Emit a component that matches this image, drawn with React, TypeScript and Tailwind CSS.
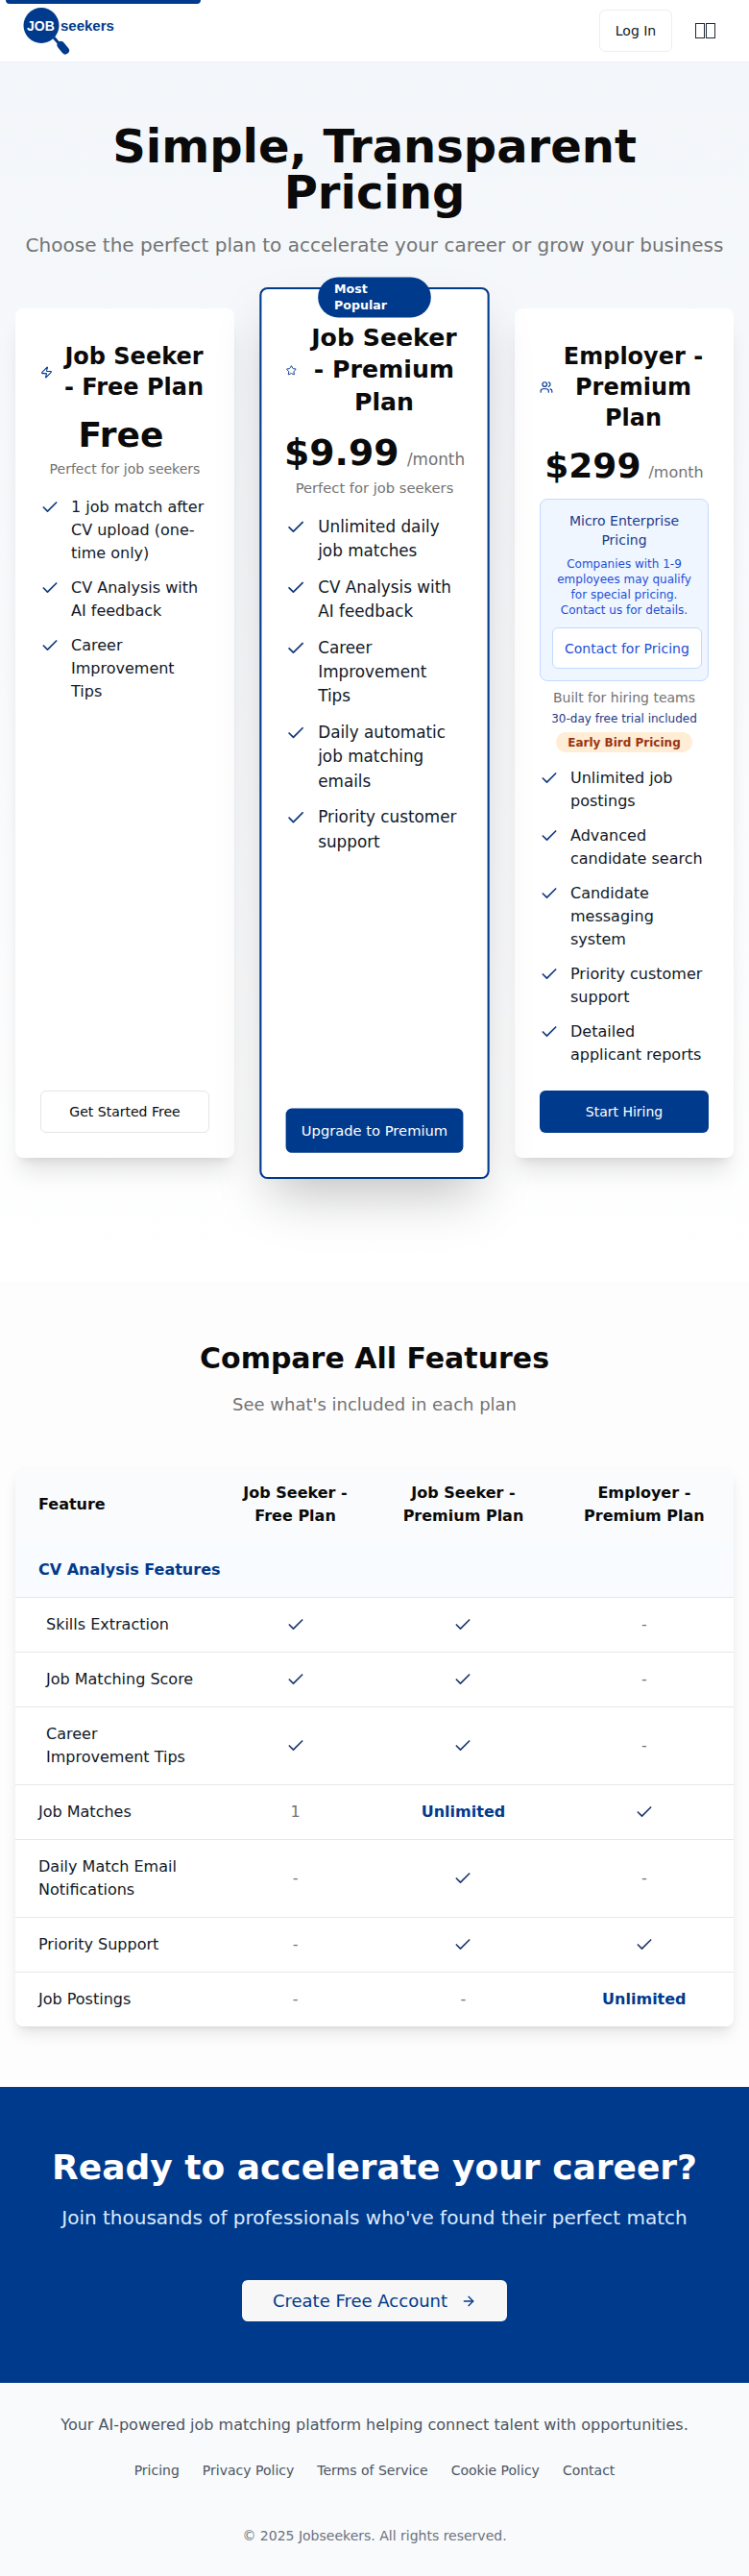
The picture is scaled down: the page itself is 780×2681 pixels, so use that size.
import { ArrowRight, Check, Star, Users, Zap } from "lucide-react";
import type { ReactNode } from "react";

function Logo() {
  return (
    <svg width="100" height="50" viewBox="0 0 100 50" className="block">
      <circle cx="19" cy="18.500" r="18.500" fill="#003a8c" />
      <path d="M32 31 L38 38" stroke="#003a8c" strokeWidth="3" />
      <path d="M39.500 39 L44 44.500" stroke="#003a8c" strokeWidth="8" strokeLinecap="round" />
      <text x="4" y="24" fill="#ffffff" fontSize="14" fontWeight="700" fontFamily="Liberation Sans, sans-serif">
        JOB
      </text>
      <text x="39" y="24" fill="#003a8c" fontSize="15" fontWeight="700" fontFamily="Liberation Sans, sans-serif">
        seekers
      </text>
    </svg>
  );
}

function Header() {
  return (
    <header className="relative flex h-[65px] items-center justify-between border-b border-[#eef1f5] bg-white pl-6 pr-[35px]">
      <div className="absolute left-[6px] top-0 h-1 w-[203px] rounded-b-sm bg-[#003a8c]" />
      <div className="self-start pt-2">
        <Logo />
      </div>
      <div className="flex items-center">
        <button className="h-[44px] w-[76px] rounded-md border border-[#eceef1] bg-white text-sm text-[#111827]">
          Log In
        </button>
        <div className="ml-[24px] flex gap-[1px]">
          <span className="h-[16px] w-[10px] border border-[#1f2937]" />
          <span className="h-[16px] w-[10px] border border-[#1f2937]" />
        </div>
      </div>
    </header>
  );
}

function Feature({ children }: { children: ReactNode }) {
  return (
    <li className="flex items-start">
      <Check className="mr-3 mt-0.5 h-5 w-5 shrink-0 text-[#12397c]" />
      <span className="text-base leading-6 text-[#111827]">{children}</span>
    </li>
  );
}

function PlanTitle({ icon, children }: { icon: ReactNode; children: ReactNode }) {
  return (
    <div className="mb-[14px] flex items-center">
      <span className="mr-1 w-[15px] shrink-0 text-[#003a8c]">{icon}</span>
      <h3 className="flex-1 text-center text-2xl font-bold leading-8 text-[#0a0a0a]">{children}</h3>
    </div>
  );
}

function Price({ amount, suffix }: { amount: string; suffix?: string }) {
  return (
    <div className="flex items-baseline justify-center">
      <span className="text-4xl font-bold text-[#0a0a0a]">{amount}</span>
      <span className="ml-2 text-base text-[#737373]">{suffix}</span>
    </div>
  );
}

function Pricing() {
  return (
    <section className="bg-gradient-to-b from-[#f3f6fa] to-white px-4 pb-[128px] pt-[63px]">
      <h1 className="text-center text-5xl font-bold leading-[48px] text-[#0a0a0a]">Simple, Transparent Pricing</h1>
      <p className="mb-[52px] mt-[17px] whitespace-nowrap text-center text-xl text-[#737373]">
        Choose the perfect plan to accelerate your career or grow your business
      </p>
      <div className="grid grid-cols-3 gap-8">
        <div className="flex flex-col rounded-lg border-2 border-white bg-white px-6 pb-6 pt-[32px] shadow-xl">
          <PlanTitle icon={<Zap size={13} />}>Job Seeker - Free Plan</PlanTitle>
          <Price amount="Free" />
          <p className="mb-[18px] mt-[5px] text-center text-sm text-[#737373]">Perfect for job seekers</p>
          <ul className="mb-[25px] flex flex-col gap-3">
            <Feature>1 job match after CV upload (one-time only)</Feature>
            <Feature>CV Analysis with AI feedback</Feature>
            <Feature>Career Improvement Tips</Feature>
          </ul>
          <button className="mt-auto h-11 rounded-md border border-[#e5e5e5] bg-white text-sm font-medium text-[#0a0a0a]">
            Get Started Free
          </button>
        </div>

        <div className="relative flex scale-105 flex-col rounded-lg border-2 border-[#003a8c] bg-white px-6 pb-6 pt-[32px] shadow-2xl">
          <div className="absolute -top-3 left-1/2 -translate-x-1/2 rounded-full bg-[#003a8c] px-4 py-1 text-xs font-bold leading-4 text-white">
            Most Popular
          </div>
          <PlanTitle icon={<Star size={11} />}>Job Seeker - Premium Plan</PlanTitle>
          <Price amount="$9.99" suffix="/month" />
          <p className="mb-[17px] mt-[5px] text-center text-sm text-[#737373]">Perfect for job seekers</p>
          <ul className="mb-[25px] flex flex-col gap-3">
            <Feature>Unlimited daily job matches</Feature>
            <Feature>CV Analysis with AI feedback</Feature>
            <Feature>Career Improvement Tips</Feature>
            <Feature>Daily automatic job matching emails</Feature>
            <Feature>Priority customer support</Feature>
          </ul>
          <button className="mt-auto h-11 rounded-md bg-[#003a8c] text-sm font-medium text-white">
            Upgrade to Premium
          </button>
        </div>

        <div className="flex flex-col rounded-lg border-2 border-white bg-white px-6 pb-6 pt-[32px] shadow-xl">
          <PlanTitle icon={<Users size={14} />}>Employer - Premium Plan</PlanTitle>
          <Price amount="$299" suffix="/month" />
          <div className="mb-[7px] mt-[14px] rounded-lg border border-[#bfdbfe] bg-[#eff6ff] p-3 text-center">
            <p className="mb-[7px] text-sm text-[#1e3a8a]">Micro Enterprise Pricing</p>
            <p className="mb-[10px] text-xs text-[#1d4ed8]">
              Companies with 1-9 employees may qualify for special pricing. Contact us for details.
            </p>
            <button className="block h-[43px] whitespace-nowrap rounded-md border border-[#bfdbfe] bg-white px-3 text-sm text-[#1d4ed8]">
              Contact for Pricing
            </button>
          </div>
          <p className="text-center text-sm text-[#737373]">Built for hiring teams</p>
          <p className="mt-1 text-center text-xs text-[#1e3a8a]">30-day free trial included</p>
          <div className="mb-[15px] mt-[6px] flex justify-center">
            <span className="rounded-full bg-[#ffedd5] px-3 py-[2.5px] text-xs font-bold text-[#9a3412]">
              Early Bird Pricing
            </span>
          </div>
          <ul className="mb-[25px] flex flex-col gap-3">
            <Feature>Unlimited job postings</Feature>
            <Feature>Advanced candidate search</Feature>
            <Feature>Candidate messaging system</Feature>
            <Feature>Priority customer support</Feature>
            <Feature>Detailed applicant reports</Feature>
          </ul>
          <button className="mt-auto h-11 rounded-md bg-[#003a8c] text-sm font-medium text-white">Start Hiring</button>
        </div>
      </div>
    </section>
  );
}

type Cell = "check" | "-" | string;

const ROWS: { name: string; cells: Cell[]; indent?: boolean }[] = [
  { name: "Skills Extraction", cells: ["check", "check", "-"], indent: true },
  { name: "Job Matching Score", cells: ["check", "check", "-"], indent: true },
  { name: "Career Improvement Tips", cells: ["check", "check", "-"], indent: true },
  { name: "Job Matches", cells: ["1", "Unlimited", "check"] },
  { name: "Daily Match Email Notifications", cells: ["-", "check", "-"] },
  { name: "Priority Support", cells: ["-", "check", "check"] },
  { name: "Job Postings", cells: ["-", "-", "Unlimited"] },
];

function TableCell({ value }: { value: Cell }) {
  if (value === "check") return <Check className="mx-auto h-5 w-5 text-[#1e3a6e]" />;
  if (value === "Unlimited") return <span className="font-bold text-[#003a8c]">Unlimited</span>;
  return <span className="text-[#737373]">{value}</span>;
}

function Compare() {
  return (
    <section className="bg-[#fdfdfe] px-4 pb-[63px] pt-[63px]">
      <h2 className="text-center text-3xl font-bold text-[#0a0a0a]">Compare All Features</h2>
      <p className="mb-[50px] mt-4 text-center text-lg text-[#737373]">See what's included in each plan</p>
      <div className="overflow-hidden rounded-lg bg-white shadow-lg">
        <table className="w-full border-collapse text-base">
          <thead>
            <tr className="bg-[#fafbfc]">
              <th className="px-6 py-4 text-left font-bold text-[#0a0a0a]">Feature</th>
              <th className="px-6 py-4 text-center font-bold text-[#0a0a0a]">Job Seeker - Free Plan</th>
              <th className="px-6 py-4 text-center font-bold text-[#0a0a0a]">Job Seeker - Premium Plan</th>
              <th className="px-6 py-4 text-center font-bold text-[#0a0a0a]">Employer - Premium Plan</th>
            </tr>
          </thead>
          <tbody>
            <tr className="border-b border-[#e5e7eb] bg-[#f8fbff]">
              <td colSpan={4} className="px-6 py-4 font-bold text-[#003a8c]">
                CV Analysis Features
              </td>
            </tr>
            {ROWS.map((row) => (
              <tr key={row.name} className="border-b border-[#e5e7eb] last:border-b-0">
                <td className={`py-4 pr-6 text-[#111827] ${row.indent ? "pl-8" : "pl-6"}`}>{row.name}</td>
                {row.cells.map((cell, i) => (
                  <td key={i} className="px-6 py-4 text-center">
                    <TableCell value={cell} />
                  </td>
                ))}
              </tr>
            ))}
          </tbody>
        </table>
      </div>
    </section>
  );
}

function Cta() {
  return (
    <section className="bg-[#003a8c] px-4 pb-16 pt-16 text-center">
      <h2 className="text-4xl font-bold text-white">Ready to accelerate your career?</h2>
      <p className="mb-[51px] mt-[18px] text-xl text-[#dbeafe]">Join thousands of professionals who've found their perfect match</p>
      <button className="mx-auto flex h-[43px] items-center rounded-md bg-[#f7f7f7] px-8 text-lg text-[#003a8c]">
        Create Free Account
        <ArrowRight className="ml-[14px] h-4 w-4" />
      </button>
    </section>
  );
}

function Footer() {
  const links = ["Pricing", "Privacy Policy", "Terms of Service", "Cookie Policy", "Contact"];
  return (
    <footer className="bg-[#f9fafb] px-4 pt-8 text-center">
      <p className="text-base text-[#4b5563]">Your AI-powered job matching platform helping connect talent with opportunities.</p>
      <nav className="mt-[25px] flex justify-center gap-6 text-sm text-[#4b5563]">
        {links.map((l) => (
          <a key={l}>{l}</a>
        ))}
      </nav>
      <p className="mt-12 pb-8 text-sm text-[#6b7280]">© 2025 Jobseekers. All rights reserved.</p>
    </footer>
  );
}

export default function App() {
  return (
    <div className="font-['DejaVu_Sans',sans-serif]">
      <Header />
      <Pricing />
      <Compare />
      <Cta />
      <Footer />
    </div>
  );
}
